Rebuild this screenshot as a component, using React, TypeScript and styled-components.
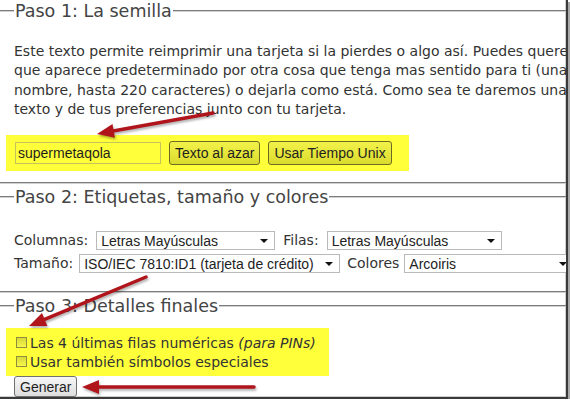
import styled, { createGlobalStyle } from "styled-components";

const GlobalStyle = createGlobalStyle`
  body {
    margin: 0;
    background: #fff;
  }
`;

const arrows = [
  { x1: 213, y1: 113, x2: 97, y2: 134 },
  { x1: 146, y1: 277, x2: 29, y2: 326 },
  { x1: 254, y1: 387, x2: 82, y2: 387 },
];

function Arrow({ x1, y1, x2, y2 }: { x1: number; y1: number; x2: number; y2: number }) {
  const len = Math.hypot(x2 - x1, y2 - y1);
  const ux = (x2 - x1) / len;
  const uy = (y2 - y1) / len;
  const head = 17;
  const half = 7;
  const bx = x2 - ux * head;
  const by = y2 - uy * head;
  const pts = [
    [x2, y2],
    [bx - uy * half, by + ux * half],
    [bx + uy * half, by - ux * half],
  ]
    .map((p) => p.join(","))
    .join(" ");
  return (
    <g>
      <line x1={x1} y1={y1} x2={bx + ux * 2} y2={by + uy * 2} stroke="#b0151b" strokeWidth={3.5} strokeLinecap="round" />
      <polygon points={pts} fill="#b0151b" />
    </g>
  );
}

function App() {
  return (
    <>
      <GlobalStyle />
      <Frame>
        <Section $bottom={11}>
          <Legend>Paso 1: La semilla</Legend>
          <Intro>
            Este texto permite reimprimir una tarjeta si la pierdes o algo así. Puedes querer
            <br />
            que aparece predeterminado por otra cosa que tenga mas sentido para ti (una
            <br />
            nombre, hasta 220 caracteres) o dejarla como está. Como sea te daremos una
            <br />
            texto y de tus preferencias junto con tu tarjeta.
          </Intro>
          <Highlight $top={16} $pad="6px 17px 6px 9px">
            <SeedInput defaultValue="supermetaqola" />
            <Button $onYellow>Texto al azar</Button>
            <Button $onYellow>Usar Tiempo Unix</Button>
          </Highlight>
        </Section>

        <Section $bottom={18}>
          <Legend>Paso 2: Etiquetas, tamaño y colores</Legend>
          <Rows>
            <Row>
              <Label $space={8}>Columnas:</Label>
              <Select $width={179}>
                Letras Mayúsculas
                <Caret />
              </Select>
              <Label $space={8} $lead={8}>Filas:</Label>
              <Select $width={175}>
                Letras Mayúsculas
                <Caret />
              </Select>
            </Row>
            <Row>
              <Label $space={6}>Tamaño:</Label>
              <Select $width={261}>
                ISO/IEC 7810:ID1 (tarjeta de crédito)
                <Caret />
              </Select>
              <Label $space={5} $lead={7}>Colores</Label>
              <Select $width={170}>
                Arcoiris
                <Caret />
              </Select>
            </Row>
          </Rows>
        </Section>

        <Section $bottom={20}>
          <Legend>Paso 3: Detalles finales</Legend>
          <Highlight $top={11} $pad="5px 13px 5px 10px" $column>
            <CheckRow>
              <CheckBox />
              Las 4 últimas filas numéricas&nbsp;<em>(para PINs)</em>
            </CheckRow>
            <CheckRow>
              <CheckBox />
              Usar también símbolos especiales
            </CheckRow>
          </Highlight>
          <Button>Generar</Button>
        </Section>

        <Marks viewBox="0 0 566 397">
          {arrows.map((a, i) => (
            <Arrow key={i} {...a} />
          ))}
        </Marks>
      </Frame>
    </>
  );
}

export default App;

const Frame = styled.div`
  position: relative;
  width: 566px;
  height: 397px;
  overflow: hidden;
  background: #fff;
  border-right: 2px solid #3a3a3a;
  border-bottom: 2px solid #3a3a3a;
  box-shadow: 2px 2px 0 #a9a9a9, inset -1px -1px 0 #cfcfcf;
  font-family: "DejaVu Sans", Verdana, sans-serif;
  font-size: 14px;
  color: #333;
`;

const Section = styled.fieldset<{ $bottom: number }>`
  margin: 0 0 2px;
  padding: 0 0 ${(p) => p.$bottom}px 14px;
  border: none;
  border-top: 2px groove #d0d0d0;
  border-bottom: 2px groove #d0d0d0;
  min-width: 0;
`;

const Legend = styled.legend`
  padding: 0 1px;
  font-size: 17.5px;
  line-height: 22px;
  color: #444;
`;

const Intro = styled.p`
  margin: 20px 0 0;
  line-height: 19.3px;
  white-space: nowrap;
`;

const Highlight = styled.div<{ $top: number; $pad: string; $column?: boolean }>`
  display: flex;
  flex-direction: ${(p) => (p.$column ? "column" : "row")};
  align-items: ${(p) => (p.$column ? "flex-start" : "center")};
  gap: ${(p) => (p.$column ? "0" : "8px")};
  width: fit-content;
  margin: ${(p) => p.$top}px 0 0 -8px;
  padding: ${(p) => p.$pad};
  background: #ffff3a;
`;

const SeedInput = styled.input`
  box-sizing: border-box;
  width: 146px;
  height: 22px;
  padding: 0 2px;
  border: 1px solid #c4c45a;
  background: #ffff3a;
  font-family: "Liberation Sans", Arial, sans-serif;
  font-size: 14px;
  color: #1e1e1e;
  outline: none;
`;

const Button = styled.button<{ $onYellow?: boolean }>`
  box-sizing: border-box;
  height: ${(p) => (p.$onYellow ? "24px" : "21px")};
  padding: 0 5px;
  border: 1px solid ${(p) => (p.$onYellow ? "#6b6b24" : "#707070")};
  border-radius: 3px;
  background: ${(p) =>
    p.$onYellow
      ? "linear-gradient(#f2f24a, #dada2e)"
      : "linear-gradient(#f6f6f6, #dddddd)"};
  font-family: "Liberation Sans", Arial, sans-serif;
  font-size: 14px;
  color: #1e1e1e;
  white-space: nowrap;
`;

const Rows = styled.div`
  display: flex;
  flex-direction: column;
  gap: 4px;
  margin-top: 23px;
`;

const Row = styled.div`
  display: flex;
  align-items: center;
  white-space: nowrap;
`;

const Label = styled.span<{ $space: number; $lead?: number }>`
  line-height: 19px;
  margin-left: ${(p) => p.$lead ?? 0}px;
  margin-right: ${(p) => p.$space}px;
`;

const Select = styled.div<{ $width: number }>`
  display: flex;
  align-items: center;
  justify-content: space-between;
  box-sizing: border-box;
  flex: none;
  width: ${(p) => p.$width}px;
  height: 19px;
  padding: 0 6px 0 4px;
  border: 1px solid #b9b9b9;
  background: #fff;
  font-family: "Liberation Sans", Arial, sans-serif;
  font-size: 14px;
  color: #222;
`;

const Caret = styled.span`
  width: 0;
  height: 0;
  border-left: 4px solid transparent;
  border-right: 4px solid transparent;
  border-top: 4px solid #111;
`;

const CheckRow = styled.label`
  display: flex;
  align-items: center;
  height: 19px;
  white-space: nowrap;
`;

const CheckBox = styled.span`
  box-sizing: border-box;
  width: 11px;
  height: 11px;
  margin-right: 3px;
  border: 1px solid #8d8d3c;
  background: linear-gradient(#d8d838, #f6f64c);
`;

const Marks = styled.svg`
  position: absolute;
  top: 0;
  left: 0;
  width: 566px;
  height: 397px;
  pointer-events: none;
  filter: drop-shadow(1px 2px 1px rgba(0, 0, 0, 0.3));
`;
